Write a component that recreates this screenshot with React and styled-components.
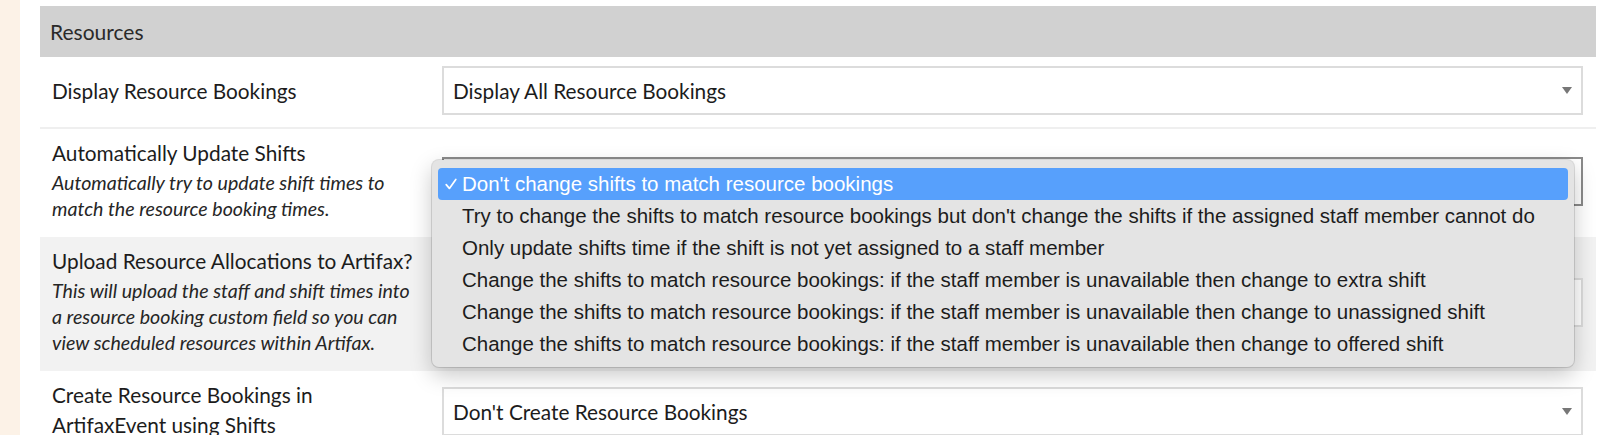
import React from "react";
import styled, { createGlobalStyle } from "styled-components";

const GlobalStyle = createGlobalStyle`
  html, body { margin: 0; padding: 0; background: #fff; }
  body { font-family: "Lato", "Liberation Sans", sans-serif; }
  * { box-sizing: border-box; }
`;

const Page = styled.div`
  display: flex;
  width: 1600px;
  height: 435px;
  overflow: hidden;
  background: #fff;
`;

const Sidebar = styled.div`
  flex: none;
  width: 20px;
  background: #fcf2e7;
`;

const Main = styled.div`
  flex: 1;
  display: flex;
  flex-direction: column;
  padding-top: 1px;
`;

const TopRule = styled.div`
  height: 2px;
  background: #ebebeb;
`;

const Panel = styled.section`
  margin: 5px 4px 0 20px;
`;

const Header = styled.div`
  display: flex;
  align-items: center;
  height: 51px;
  padding: 0 10px;
  background: #d1d1d1;
  color: #2a2a2a;
  font-size: 21px;
`;

const Row = styled.div`
  display: grid;
  grid-template-columns: 391px 1fr;
  column-gap: 11px;
  align-items: center;
  padding-right: 13px;
  background: ${(p) => (p.$shaded ? "#f2f2f2" : "#fff")};
  border-bottom: ${(p) => (p.$divider ? "2px solid #efefef" : "none")};
`;

const Label = styled.div`
  padding: ${(p) => (p.$single ? "9px 12px 12px" : "9px 12px 15px")};
`;

const Title = styled.div`
  font-size: 20.8px;
  line-height: 30px;
  color: #1c1c1c;
`;

const Hint = styled.div`
  margin-top: 2px;
  font-size: 19.6px;
  line-height: 26px;
  font-style: italic;
  color: #262626;
`;

const Control = styled.div`
  padding: 9px 0 12px;
`;

const SelectBox = styled.div`
  position: relative;
  display: flex;
  align-items: center;
  justify-content: space-between;
  height: 49px;
  padding: 0 9px;
  background: #fff;
  border: 2px solid ${(p) => (p.$focused ? "#8a8a8a" : "#dcdcdc")};
  font-size: 20.8px;
  color: #1c1c1c;
`;

const Arrow = () => (
  <svg width="10" height="7" viewBox="0 0 10 7">
    <polygon points="0,0 10,0 5,7" fill="#777" />
  </svg>
);

const Menu = styled.ul`
  position: absolute;
  top: 1px;
  left: -12px;
  right: 7px;
  z-index: 10;
  margin: 0;
  padding: 8px 6px 7px;
  list-style: none;
  background: #e4e4e4;
  border-radius: 7px;
  box-shadow: 0 0 0 1px rgba(0, 0, 0, 0.12), 0 8px 22px rgba(0, 0, 0, 0.22);
  font-family: "Liberation Sans", Arial, sans-serif;
  font-size: 20.5px;
`;

const Option = styled.li`
  display: flex;
  align-items: center;
  height: 32px;
  padding-left: 7px;
  border-radius: 4px;
  white-space: nowrap;
  background: ${(p) => (p.$selected ? "#57a0fc" : "transparent")};
  color: ${(p) => (p.$selected ? "#fff" : "#1c1c1c")};
`;

const CheckSlot = styled.span`
  flex: none;
  display: flex;
  align-items: center;
  width: 17px;
  height: 100%;
`;

const CheckIcon = () => (
  <svg width="12" height="12" viewBox="0 0 12 12">
    <path d="M1.2 6.6 L4.4 10.4 L10.8 1.4" fill="none" stroke="#fff" strokeWidth="1.7" strokeLinecap="round" strokeLinejoin="round" />
  </svg>
);

const shiftOptions = [
  "Don't change shifts to match resource bookings",
  "Try to change the shifts to match resource bookings but don't change the shifts if the assigned staff member cannot do",
  "Only update shifts time if the shift is not yet assigned to a staff member",
  "Change the shifts to match resource bookings: if the staff member is unavailable then change to extra shift",
  "Change the shifts to match resource bookings: if the staff member is unavailable then change to unassigned shift",
  "Change the shifts to match resource bookings: if the staff member is unavailable then change to offered shift",
];

const Select = ({ value, focused, children }) => (
  <SelectBox $focused={focused}>
    <span>{value}</span>
    <Arrow />
    {children}
  </SelectBox>
);

export default function App() {
  return (
    <>
      <GlobalStyle />
      <Page>
        <Sidebar />
        <Main>
          <TopRule />
          <Panel>
            <Header>Resources</Header>

            <Row $divider>
              <Label $single>
                <Title>Display Resource Bookings</Title>
              </Label>
              <Control>
                <Select value="Display All Resource Bookings" />
              </Control>
            </Row>

            <Row>
              <Label>
                <Title>Automatically Update Shifts</Title>
                <Hint>Automatically try to update shift times to match the resource booking times.</Hint>
              </Label>
              <Control>
                <Select focused value="">
                  <Menu>
                    {shiftOptions.map((o, i) => (
                      <Option key={i} $selected={i === 0}>
                        <CheckSlot>{i === 0 && <CheckIcon />}</CheckSlot>
                        {o}
                      </Option>
                    ))}
                  </Menu>
                </Select>
              </Control>
            </Row>

            <Row $shaded>
              <Label>
                <Title>Upload Resource Allocations to Artifax?</Title>
                <Hint>
                  This will upload the staff and shift times into a resource booking custom field so you can view
                  scheduled resources within Artifax.
                </Hint>
              </Label>
              <Control>
                <Select value="" />
              </Control>
            </Row>

            <Row>
              <Label>
                <Title>Create Resource Bookings in ArtifaxEvent using Shifts</Title>
              </Label>
              <Control>
                <Select value="Don't Create Resource Bookings" />
              </Control>
            </Row>
          </Panel>
        </Main>
      </Page>
    </>
  );
}
